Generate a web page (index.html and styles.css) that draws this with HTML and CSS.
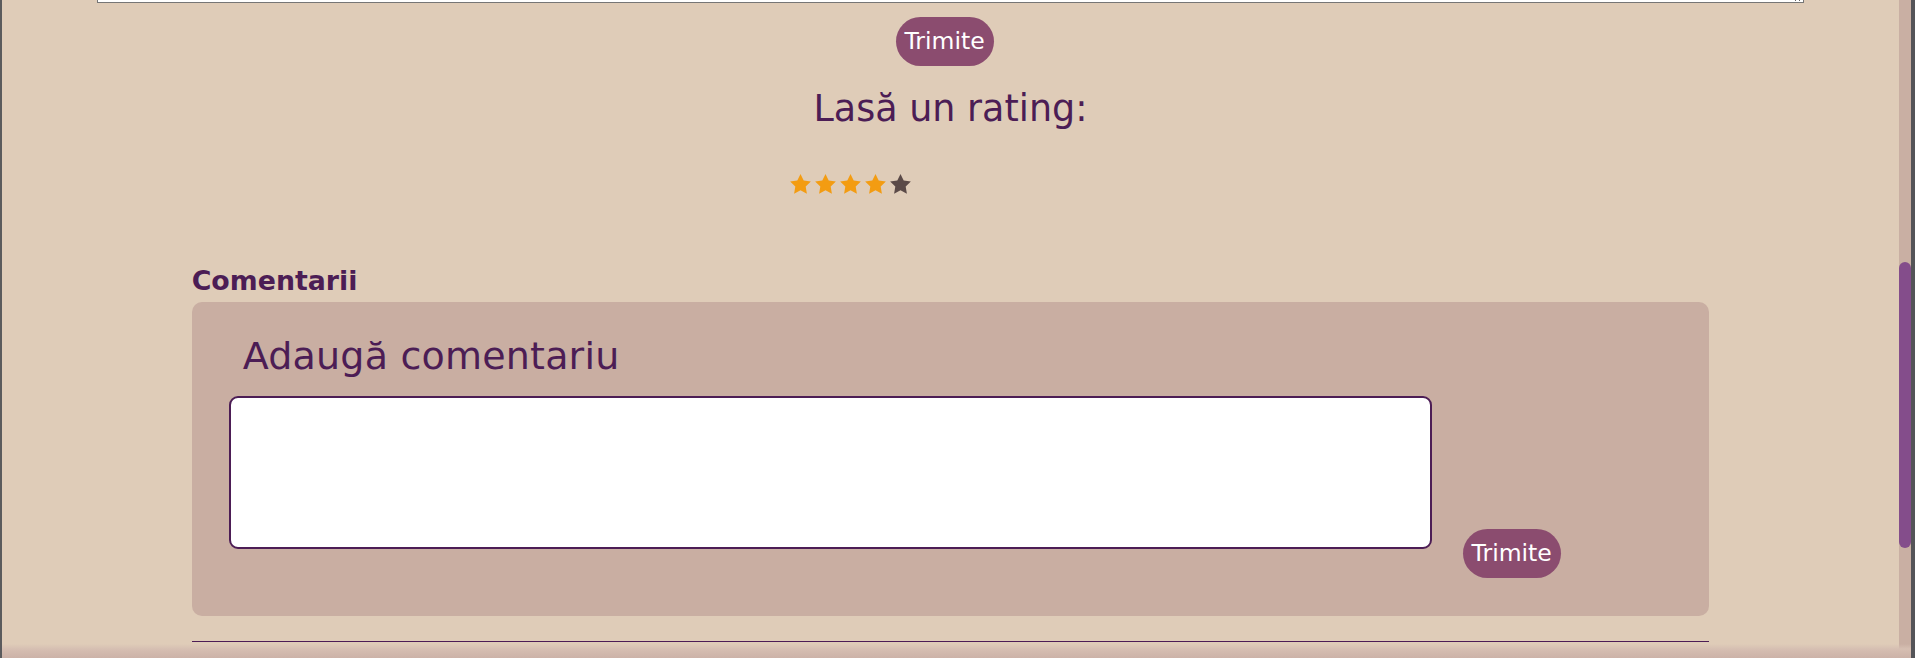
FILE: index.html
```html
<!DOCTYPE html>
<html lang="ro">
<head>
<meta charset="utf-8">
<title>Rating și comentarii</title>
<link rel="stylesheet" href="styles.css">
</head>
<body>
<div class="window">
  <main class="viewport">
    <div class="top-field">
      <textarea class="top-textarea" aria-label="Mesaj"></textarea>
    </div>
    <div class="top-actions">
      <button class="btn btn-top" type="button">Trimite</button>
    </div>
    <h2 class="rating-title">Lasă un rating:</h2>
    <div class="stars">
      <svg class="star star-on" viewBox="2 2 20 19.3"><polygon points="12,2 15.09,8.26 22,9.27 17,14.14 18.18,21.02 12,17.77 5.82,21.02 7,14.14 2,9.27 8.91,8.26"/></svg>
      <svg class="star star-on" viewBox="2 2 20 19.3"><polygon points="12,2 15.09,8.26 22,9.27 17,14.14 18.18,21.02 12,17.77 5.82,21.02 7,14.14 2,9.27 8.91,8.26"/></svg>
      <svg class="star star-on" viewBox="2 2 20 19.3"><polygon points="12,2 15.09,8.26 22,9.27 17,14.14 18.18,21.02 12,17.77 5.82,21.02 7,14.14 2,9.27 8.91,8.26"/></svg>
      <svg class="star star-on" viewBox="2 2 20 19.3"><polygon points="12,2 15.09,8.26 22,9.27 17,14.14 18.18,21.02 12,17.77 5.82,21.02 7,14.14 2,9.27 8.91,8.26"/></svg>
      <svg class="star star-off" viewBox="2 2 20 19.3"><polygon points="12,2 15.09,8.26 22,9.27 17,14.14 18.18,21.02 12,17.77 5.82,21.02 7,14.14 2,9.27 8.91,8.26"/></svg>
    </div>
    <section class="comments">
      <h3 class="comments-title">Comentarii</h3>
      <div class="comment-box">
        <h2 class="comment-heading">Adaugă comentariu</h2>
        <div class="comment-row">
          <textarea class="comment-input" aria-label="Comentariu"></textarea>
          <button class="btn btn-send" type="button">Trimite</button>
        </div>
      </div>
      <hr class="divider">
    </section>
  </main>
  <div class="scrollbar"><div class="thumb"></div></div>
  <div class="bottom-shade"></div>
</div>
</body>
</html>
```

FILE: styles.css
```css
html, body {
  margin: 0;
  padding: 0;
  height: 658px;
  overflow: hidden;
  background: #dfccb8;
}

.window {
  position: relative;
  display: flex;
  height: 658px;
  border-left: 2px solid #5b5b5d;
  border-right: 4px solid #545458;
  box-sizing: border-box;
  background: #dfccb8;
  font-family: "DejaVu Sans", "Liberation Sans", sans-serif;
  color: #4c1d55;
}

.viewport {
  flex: 1;
  min-width: 0;
  overflow: hidden;
  display: flex;
  flex-direction: column;
}

.top-field {
  height: 3px;
  overflow: hidden;
  width: 90%;
  margin: 0 auto;
  flex: none;
}

.top-textarea {
  display: block;
  box-sizing: border-box;
  width: 100%;
  height: 100px;
  margin-top: -97px;
  border: 1px solid #767676;
  background: #ffffff;
  padding: 2px;
}

.top-actions {
  margin-top: 14px;
  display: flex;
  justify-content: center;
}

.btn {
  box-sizing: border-box;
  width: 98px;
  height: 49px;
  border: none;
  border-radius: 25px;
  background: #8b4c6f;
  color: #ffffff;
  font-family: "DejaVu Sans", "Liberation Sans", sans-serif;
  font-size: 23.5px;
  line-height: 1;
  padding: 0;
  display: flex;
  align-items: center;
  justify-content: center;
  cursor: pointer;
}

.btn-top {
  margin-right: 12px;
}

.rating-title {
  margin: 25px 0 0;
  font-size: 36.5px;
  line-height: 36px;
  font-weight: normal;
  text-align: center;
}

.stars {
  margin-top: 47px;
  display: flex;
  justify-content: center;
  gap: 4px;
  padding-right: 200px;
  height: 20px;
}

.star {
  width: 21px;
  height: 20px;
  display: block;
}

.star-on { fill: #f39c12; }
.star-off { fill: #5b4a48; }

.comments {
  width: 80%;
  margin: 73px auto 0;
}

.comments-title {
  margin: 0;
  font-size: 26.8px;
  line-height: 27px;
  font-weight: bold;
}

.comment-box {
  margin-top: 8px;
  background: #c9aea2;
  border-radius: 10px;
  padding: 36px 37px 38px;
}

.comment-heading {
  margin: 0 0 0 14px;
  font-size: 38px;
  line-height: 37px;
  font-weight: normal;
  letter-spacing: 0.2px;
}

.comment-row {
  margin-top: 21px;
  display: flex;
  align-items: flex-start;
}

.comment-input {
  box-sizing: border-box;
  width: 1203px;
  height: 153px;
  border: 2px solid #4c1d55;
  border-radius: 9px;
  background: #ffffff;
  resize: none;
  font-family: inherit;
  flex: none;
}

.btn-send {
  margin-top: 133px;
  margin-left: 31px;
  flex: none;
}

.divider {
  margin: 25px 0 0;
  border: none;
  border-top: 1px solid #4c1d55;
  height: 0;
}

.scrollbar {
  width: 12px;
  flex: none;
  background: #c9afa3;
}

.thumb {
  margin-top: 262px;
  height: 286px;
  border-radius: 6px;
  background: #844d8b;
}

.bottom-shade {
  position: absolute;
  left: 0;
  right: 0;
  bottom: 0;
  height: 14px;
  background: linear-gradient(to bottom, rgba(205, 180, 170, 0) 0%, #d6bfb2 35%, #ccb2a8 100%);
}
```
